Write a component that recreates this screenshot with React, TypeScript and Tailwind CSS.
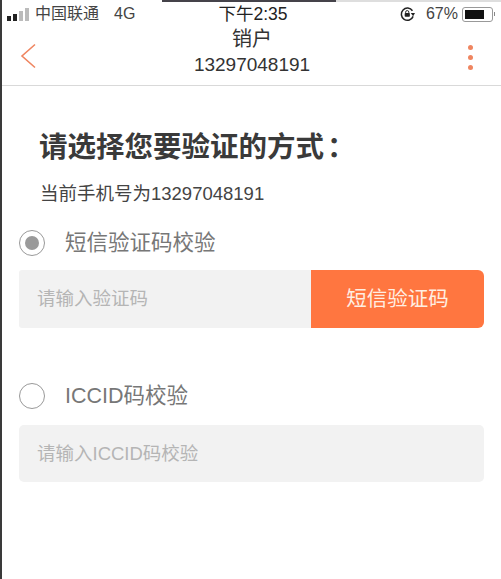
import React from 'react';

const Radio = ({ checked }: { checked?: boolean }) => (
  <span className="w-[26px] h-[26px] rounded-full border-[1.5px] border-[#999] flex items-center justify-center shrink-0">
    {checked && <span className="w-[14px] h-[14px] rounded-full bg-[#9a9a9a]" />}
  </span>
);

export default function App() {
  return (
    <div className="w-[501px] h-[579px] overflow-hidden bg-white flex font-['Liberation_Sans','Noto_Sans_CJK_SC',sans-serif]">
      <div className="w-[2px] bg-[#3a3a3a] shrink-0" />
      <div className="flex-1 flex flex-col min-w-0">
        {/* screenshot edge */}
        <div className="h-[2px] flex">
          <div className="w-[160px]" />
          <div className="w-[174px] bg-[#45434a]" />
          <div className="flex-1 bg-[#dedede]" />
        </div>
        {/* status bar */}
        <div className="h-[24px] flex items-center justify-between pl-[5px] pr-[6px] text-[#444] text-[16px]">
          <div className="flex items-center w-[170px]">
            <span className="flex items-end gap-[2px] h-[13px] mr-[6px]">
              <span className="w-[4px] h-[5px] bg-[#222]" />
              <span className="w-[4px] h-[7px] bg-[#222]" />
              <span className="w-[4px] h-[10px] bg-[#bbb]" />
              <span className="w-[4px] h-[13px] bg-[#bbb]" />
            </span>
            <span>中国联通</span>
            <span className="ml-[15px]">4G</span>
          </div>
          <span className="ml-[4px] text-[#222] text-[17.5px]">下午2:35</span>
          <div className="flex items-center justify-end w-[170px]">
            <svg width="15" height="15" viewBox="0 0 16 16" className="mr-[11px]">
              <path d="M14 10A6.5 6.5 0 1 1 13.3 4" fill="none" stroke="#222" strokeWidth="1.6" />
              <path d="M11.5 6.5h4.5L14 9.8z" fill="#222" />
              <rect x="5" y="6.5" width="5.5" height="4" rx="0.8" fill="#222" />
              <path d="M6 6.5V5.5a1.7 1.7 0 0 1 3.4 0v1" fill="none" stroke="#222" strokeWidth="1" />
            </svg>
            <span>67%</span>
            <span className="ml-[4px] w-[31px] h-[15px] border border-[#999] rounded-[3px] p-[2px] flex">
              <span className="w-[19px] bg-[#111]" />
            </span>
            <span className="ml-[1px] w-[1px] h-[4px] bg-[#888]" />
          </div>
        </div>
        {/* title bar */}
        <div className="h-[60px] border-b border-[#d9d9d9] flex items-center justify-between pl-[18px] pr-[28px] shrink-0">
          <svg width="16" height="26" viewBox="0 0 16 26">
            <path d="M15 1.5 2 13l13 11.5" fill="none" stroke="#ef8560" strokeWidth="1.6" />
          </svg>
          <div className="flex flex-col items-center text-[#333] pb-[8px]">
            <span className="text-[20px] leading-[25px]">销户</span>
            <span className="text-[19px] leading-[25px]">13297048191</span>
          </div>
          <span className="flex flex-col gap-[5px] mt-[3px]">
            <span className="w-[5px] h-[5px] rounded-full bg-[#ef8560]" />
            <span className="w-[5px] h-[5px] rounded-full bg-[#ef8560]" />
            <span className="w-[5px] h-[5px] rounded-full bg-[#ef8560]" />
          </span>
        </div>
        {/* body */}
        <div className="flex-1 flex flex-col pl-[17px] pr-[17px]">
          <h1 className="mt-[43px] ml-[20px] text-[28.5px] leading-[36px] font-bold text-[#3a3a3a] whitespace-nowrap">
            请选择您要验证的方式<span className="ml-[3px]">：</span>
          </h1>
          <p className="mt-[16px] ml-[21px] text-[18.5px] leading-[25px] text-[#444]">当前手机号为13297048191</p>
          <label className="mt-[23px] flex items-center gap-[20px] text-[21.5px] leading-[28px] text-[#777]">
            <Radio checked />
            短信验证码校验
          </label>
          <div className="mt-[13px] h-[58px] flex">
            <div className="flex-1 bg-[#f2f2f2] rounded-l-[3px] pl-[18px] flex items-center text-[18.5px] text-[#b5b5b5]">请输入验证码</div>
            <button className="w-[173px] bg-[#ff7640] rounded-r-[6px] text-[#ffeee2] text-[20.5px]">短信验证码</button>
          </div>
          <label className="mt-[54px] flex items-center gap-[20px] text-[21.5px] leading-[28px] text-[#777]">
            <Radio />
            ICCID码校验
          </label>
          <div className="mt-[15px] h-[57px] bg-[#f2f2f2] rounded-[5px] pl-[18px] flex items-center text-[18.5px] text-[#b5b5b5]">请输入ICCID码校验</div>
        </div>
      </div>
    </div>
  );
}
